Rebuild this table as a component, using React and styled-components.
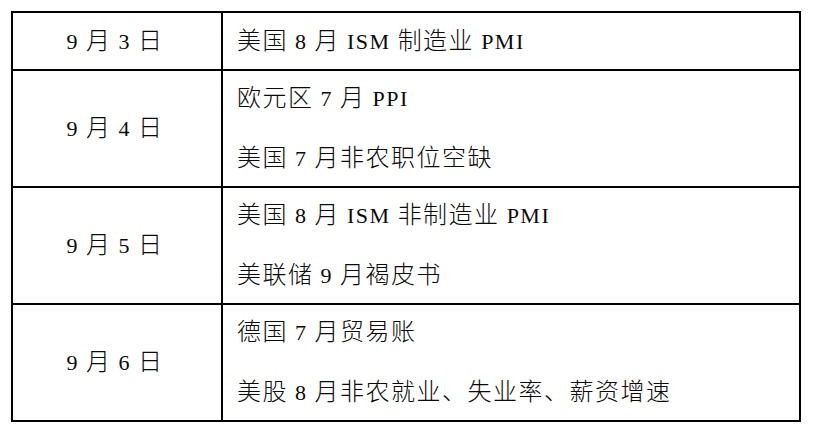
import React from 'react'
import styled, { createGlobalStyle } from 'styled-components'

const rows = [
  { date: '9 月 3 日', height: 58, events: ['美国 8 月 ISM 制造业 PMI'] },
  { date: '9 月 4 日', height: 117, events: ['欧元区 7 月 PPI', '美国 7 月非农职位空缺'] },
  { date: '9 月 5 日', height: 117, events: ['美国 8 月 ISM 非制造业 PMI', '美联储 9 月褐皮书'] },
  { date: '9 月 6 日', height: 117, events: ['德国 7 月贸易账', '美股 8 月非农就业、失业率、薪资增速'] },
]

// latin runs are set a little smaller, like Times next to SimSun in the source doc
function Mixed({ text }) {
  const parts = text.split(/([\x20-\x7e]+)/).filter(Boolean)
  return parts.map((p, i) =>
    /^[\x20-\x7e]+$/.test(p) ? <Latin key={i}>{p}</Latin> : <span key={i}>{p}</span>
  )
}

export default function App() {
  return (
    <>
      <GlobalStyle />
      <Page>
        <Table>
          {rows.map(row => (
            <Row key={row.date} height={row.height}>
              <DateCell>
                <TextLine>
                  <Mixed text={row.date} />
                </TextLine>
              </DateCell>
              <EventCell>
                {row.events.map(ev => (
                  <TextLine key={ev}>
                    <Mixed text={ev} />
                  </TextLine>
                ))}
              </EventCell>
            </Row>
          ))}
        </Table>
      </Page>
    </>
  )
}

const GlobalStyle = createGlobalStyle`
  html, body {
    margin: 0;
    padding: 0;
    background: #ffffff;
  }
  body {
    font-family: "Liberation Serif", "Noto Sans CJK SC", serif;
    color: #0a0a0a;
  }
`

const Page = styled.div`
  width: 816px;
  height: 436px;
  padding: 11px 0 0 11px;
  box-sizing: border-box;
`

const Table = styled.div`
  display: flex;
  flex-direction: column;
  width: 790px;
  border-top: 2px solid #000;
  border-left: 2px solid #000;
  box-sizing: border-box;
`

const Row = styled.div`
  display: grid;
  grid-template-columns: 210px 578px;
  height: ${props => props.height}px;
`

const Cell = styled.div`
  display: flex;
  flex-direction: column;
  justify-content: center;
  border-right: 2px solid #000;
  border-bottom: 2px solid #000;
  box-sizing: border-box;
  font-size: 24px;
  font-weight: 300;
  letter-spacing: 1.5px;
  line-height: 30px;
  white-space: pre;
`

const DateCell = styled(Cell)`
  align-items: center;
  padding-right: 4px;
`

const EventCell = styled(Cell)`
  align-items: flex-start;
  gap: 29px;
  padding-left: 14px;
`

const TextLine = styled.div`
  margin: 0;
`

const Latin = styled.span`
  font-family: "Liberation Serif", serif;
  font-size: 22px;
  font-weight: 400;
`
